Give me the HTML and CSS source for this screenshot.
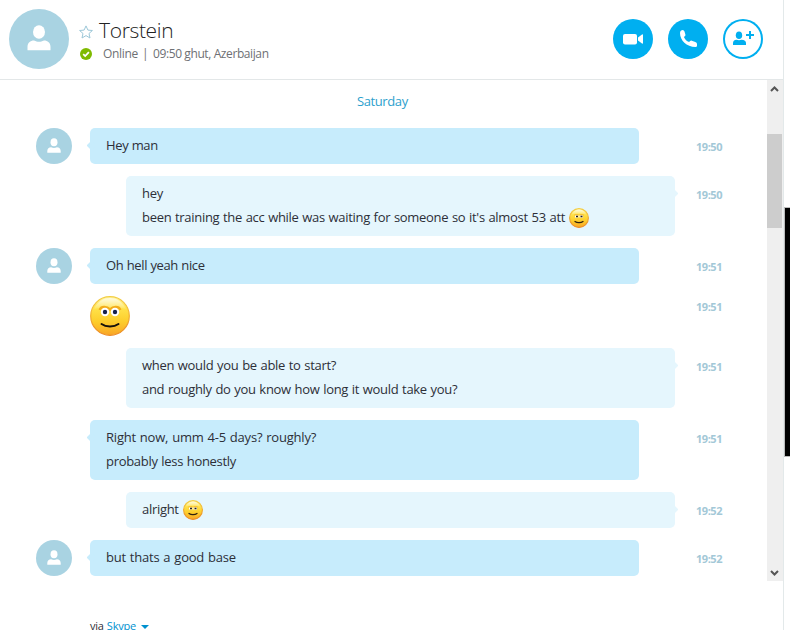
FILE: index.html
```html
<!DOCTYPE html>
<html lang="en">
<head>
<meta charset="utf-8">
<title>Torstein</title>
<link rel="stylesheet" href="styles.css">
</head>
<body>
<svg class="defs" width="0" height="0">
  <defs>
    <symbol id="person" viewBox="0 0 24 26">
      <ellipse cx="12" cy="7" rx="6" ry="6.8"/>
      <path d="M.5 25.2V22c0-4 2.800-6.400 6.500-6.400 2 .9 3.200 1.200 5 1.200s3-.3 5-1.200c3.700 0 6.500 2.400 6.500 6.400v3.200z"/>
    </symbol>
    <linearGradient id="face" x1="0" y1="0" x2="0" y2="1">
      <stop offset="0" stop-color="#fff6a8"/>
      <stop offset=".3" stop-color="#ffe24a"/>
      <stop offset=".65" stop-color="#fdcd2b"/>
      <stop offset="1" stop-color="#f9a526"/>
    </linearGradient>
    <linearGradient id="rim" x1="0" y1="0" x2="0" y2="1">
      <stop offset="0" stop-color="#f3cf45"/>
      <stop offset="1" stop-color="#ec8a24"/>
    </linearGradient>
    <linearGradient id="shine" x1="0" y1="0" x2="0" y2="1">
      <stop offset="0" stop-color="#fff" stop-opacity=".65"/>
      <stop offset="1" stop-color="#fff" stop-opacity=".1"/>
    </linearGradient>
    <symbol id="smile" viewBox="0 0 40 40">
      <circle cx="20" cy="20" r="19.300" fill="url(#face)" stroke="url(#rim)" stroke-width="1.200"/>
      <path d="M4 13C8 5 14 2 20 2s12 3 16 11c-9-2-23-2-32 0z" fill="url(#shine)"/>
      <path d="M9.800 14c1-4 7-4 10.200-.5 3.200-3.500 9.200-3.500 10.200.5" fill="none" stroke="#f3ad1c" stroke-width="2.500"/>
      <circle cx="15" cy="16" r="4.200" fill="#fff"/><circle cx="25" cy="16" r="4.200" fill="#fff"/>
      <circle cx="15" cy="16" r="2.200" fill="#16224d"/><circle cx="25" cy="16" r="2.200" fill="#16224d"/>
      <path d="M11.500 28c4.500 3.200 12.500 3.200 17 0" fill="none" stroke="#17120a" stroke-width="2" stroke-linecap="round"/>
    </symbol>
    <symbol id="smile-small" viewBox="0 0 20 20">
      <circle cx="10" cy="10" r="9.400" fill="url(#face)" stroke="url(#rim)" stroke-width="1.200"/>
      <path d="M2.500 6.500C4.500 3 7 1.500 10 1.500s5.500 1.500 7.500 5c-4-1-11-1-15 0z" fill="url(#shine)"/>
      <path d="M5.500 7h4M10.500 7h4" stroke="#eda51e"/>
      <path d="M6 8.500h3.500M10.500 8.500H14" stroke="#fff" stroke-width="2"/>
      <path d="M7 8.500h2M11.500 8.500h2" stroke="#252021" stroke-width="1.600"/>
      <path d="M6 13.500c2 1.400 6 1.400 8 0" fill="none" stroke="#30200e" stroke-width="1.300" stroke-linecap="round"/>
    </symbol>
  </defs>
</svg>
<div class="window">
  <main class="chat">
    <header class="header">
      <div class="avatar large"><svg><use href="#person"/></svg></div>
      <div class="contact">
        <div class="name-line">
          <svg class="star" viewBox="0 0 14 14"><path d="M7 .9l1.900 4.200 4.500.4L10 8.500l1 4.500-4-2.400L3 13l1-4.500L.6 5.500l4.500-.4z"/></svg>
          <h1>Torstein</h1>
        </div>
        <div class="status-line">
          <svg class="online" viewBox="0 0 12 12"><circle cx="6" cy="6" r="6"/><path d="M3.200 6.200l2 1.900 3.700-3.900"/></svg>
          <span class="state">Online</span><span class="bar">|</span><span class="place">09:50 ghut, Azerbaijan</span>
        </div>
      </div>
      <div class="actions">
        <button class="action" aria-label="Video call"><svg viewBox="0 0 40 40"><rect x="10" y="15" width="14" height="10.500" rx="2"/><path d="M25 18.500l4-3q1-.5 1 .5v8q0 1-1 .5l-4-3z"/></svg></button>
        <button class="action" aria-label="Call"><svg viewBox="0 0 40 40"><path d="M12.300 12.500q.5-1.500 2.400-1.500 1.300 0 1.800 1.500l.9 3q.3 1-.6 1.700l-.9.800c1.300 2.700 2.700 4 5.200 5.100l1-1q.7-.7 1.700-.4l3.500 1.200q1.700.6 1.700 2v1.800q0 1.300-1.500 1.300C18.500 28 12 21.500 12 14z"/></svg></button>
        <button class="action outline" aria-label="Add people"><svg viewBox="0 0 40 40"><ellipse cx="16" cy="16.200" rx="3.200" ry="3.800"/><path d="M10 26v-2q0-3 3.500-3.200 2.500.8 5 0Q23 21 23 24v2z"/><path d="M26 12h2v3h3v2h-3v3h-2v-3h-3v-2h3z"/></svg></button>
      </div>
    </header>
    <div class="body">
      <section class="messages">
        <div class="day">Saturday</div>
        <div class="row"><div class="avatar"><svg><use href="#person"/></svg></div><div class="bubble theirs"><p class="tight">Hey man</p></div><time>19:50</time></div>
        <div class="row"><div class="bubble mine"><p>hey</p><p>been training the acc while was waiting for someone so it's almost 53 att<svg class="emote"><use href="#smile-small"/></svg></p></div><time>19:50</time></div>
        <div class="row"><div class="avatar"><svg><use href="#person"/></svg></div><div class="bubble theirs"><p class="tight">Oh hell yeah nice</p></div><time>19:51</time></div>
        <div class="row sticker"><svg class="big-emote"><use href="#smile"/></svg><time>19:51</time></div>
        <div class="row"><div class="bubble mine"><p>when would you be able to start?</p><p>and roughly do you know how long it would take you?</p></div><time>19:51</time></div>
        <div class="row"><div class="bubble theirs"><p class="loose">Right now, umm 4-5 days? roughly?</p><p>probably less honestly</p></div><time>19:51</time></div>
        <div class="row"><div class="bubble mine"><p>alright<svg class="emote"><use href="#smile-small"/></svg></p></div><time>19:52</time></div>
        <div class="row"><div class="avatar"><svg><use href="#person"/></svg></div><div class="bubble theirs"><p class="loose">but thats a good base</p></div><time>19:52</time></div>
      </section>
      <div class="scrollbar">
        <svg class="arrow" viewBox="0 0 16 17"><path d="M4 11l3.500-3.500L11 11"/></svg>
        <div class="thumb"></div>
        <svg class="arrow down" viewBox="0 0 16 17"><path d="M4 7l3.500 3.500L11 7"/></svg>
      </div>
    </div>
    <footer class="via"><span>via</span><a>Skype</a><svg viewBox="0 0 8 4"><path d="M0 0h8L4 4z"/></svg></footer>
  </main>
  <aside class="edge"><div class="dark"></div></aside>
</div>
</body>
</html>
```
FILE: styles.css
```css
* { box-sizing: border-box; }
body { margin: 0; background: #fff; font-family: "Open Sans", "Noto Sans", sans-serif; color: #2d2f38; overflow: hidden; }
svg { display: block; flex: none; }
.defs { position: absolute; }
p, h1 { margin: 0; }
.window { display: flex; width: 790px; height: 630px; overflow: hidden; }
.chat { width: 783px; display: flex; flex-direction: column; }
.edge { width: 7px; border-left: 1px solid #e3e9ea; padding-top: 207px; }
.dark { height: 250px; background: #000; border: solid #bbb; border-width: 1px 0 1px 1px; }
.header { height: 80px; flex: none; display: flex; border-bottom: 1px solid #e3e7e8; padding-left: 9px; }
.avatar { width: 36px; height: 36px; border-radius: 50%; background: #a9d3e2; display: flex; justify-content: center; flex: none; }
.avatar svg { width: 14px; height: 15.5px; fill: #fff; margin-top: 9.5px; }
.avatar.large { width: 60px; height: 60px; margin-top: 9px; }
.avatar.large svg { width: 24px; height: 26px; margin-top: 16px; }
.contact { margin-left: 10px; padding-top: 15px; width: 300px; white-space: nowrap; }
.name-line { display: flex; height: 31px; }
.star { width: 14px; height: 14px; margin-top: 10px; fill: #fff; stroke: #9cc7d8; stroke-width: 1; }
h1 { font-size: 21px; line-height: 30px; font-weight: 300; margin-left: 6px; letter-spacing: -.35px; color: #222; }
.status-line { display: flex; align-items: center; height: 15px; font-size: 12px; line-height: 15px; color: #6e7074; }
.online { width: 12px; height: 12px; margin-left: 1px; fill: #7fba00; }
.online path { fill: none; stroke: #fff; stroke-width: 1.800; }
.state { width: 39px; margin-left: 11px; letter-spacing: -.3px; }
.bar { width: 11px; }
.place { letter-spacing: -.4px; }
.actions { margin-left: auto; padding: 19px 20px 0 0; display: flex; gap: 15px; }
.action { width: 40px; height: 40px; border: 0; padding: 0; border-radius: 50%; background: #00aff0; fill: #fff; }
.action svg { width: 40px; height: 40px; }
.action.outline { background: #fff; box-shadow: inset 0 0 0 2px #00aff0; fill: #00aff0; }
.body { height: 501px; flex: none; display: flex; }
.messages { width: 767px; display: flex; flex-direction: column; gap: 12px; }
.day { height: 36px; padding: 11px 0 0 357px; font-size: 13px; line-height: 20px; letter-spacing: -.4px; color: #2d9fcd; }
.row { display: flex; position: relative; padding-left: 36px; }
.bubble { width: 549px; padding: 5px 16px 7px; border-radius: 5px; font-size: 13px; position: relative; }
.bubble p { display: flex; line-height: 24px; height: 24px; white-space: nowrap; letter-spacing: -.3px; word-spacing: .6px; }
.bubble p.tight { letter-spacing: -.36px; word-spacing: .3px; }
.bubble p.loose { letter-spacing: -.2px; word-spacing: .7px; }
.theirs { background: #c7ecfc; margin-left: 54px; }
.avatar + .theirs { margin-left: 18px; }
.mine { background: #e5f6fd; margin-left: 90px; }
.bubble::before { content: ""; position: absolute; top: 14px; width: 7px; height: 7px; border-radius: 1px; background: inherit; transform: rotate(45deg); }
.theirs::before { left: -2px; }
.mine::before { right: -2px; }
time { margin: 9px 44px 0 auto; width: 27px; font-size: 11px; line-height: 20px; font-weight: 700; color: #a3c8d7; letter-spacing: -.45px; }
.sticker { padding-left: 90px; }
.sticker time { margin-top: 1px; }
.big-emote { width: 40px; height: 40px; }
.emote { width: 20px; height: 20px; margin: 3px 0 0 4px; }
.scrollbar { width: 16px; background: #efefef; display: flex; flex-direction: column; }
.arrow { width: 16px; height: 17px; fill: none; stroke: #555; stroke-width: 2; }
.arrow.down { margin-top: auto; }
.thumb { width: 15px; height: 94px; margin-top: 37px; background: #cdcdcd; }
.via { display: flex; margin: 37px 0 0 90px; font-size: 11px; line-height: 16px; letter-spacing: -.2px; }
.via a { color: #0091cf; margin-left: 3px; }
.via svg { width: 8px; height: 4px; margin: 7px 0 0 5px; fill: #0091cf; }
```
